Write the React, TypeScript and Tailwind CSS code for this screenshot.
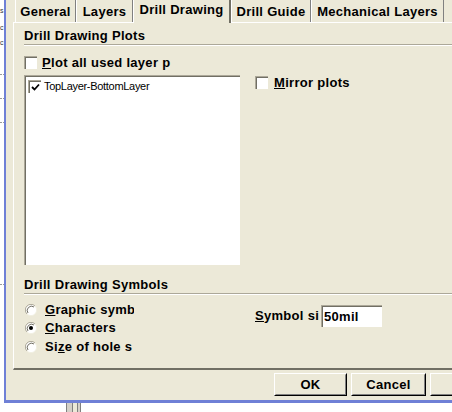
import React from 'react';

const FACE = 'bg-[#ece9d8]';

function Check({ checked = false }: { checked?: boolean }) {
  return (
    <div className="w-[13px] h-[13px] shrink-0 border-t border-l border-[#aca899] border-b-white border-r-white">
      <div className="w-full h-full border-t border-l border-[#716f64] border-b-[#f1efe2] border-r-[#f1efe2] bg-white flex items-center justify-center">
        {checked && (
          <svg width="9" height="9" viewBox="0 0 9 9">
            <path d="M1 4 L3.5 6.5 L8 1.5" stroke="#000" strokeWidth="1.8" fill="none" />
          </svg>
        )}
      </div>
    </div>
  );
}

function Radio({ checked = false }: { checked?: boolean }) {
  return (
    <svg width="12" height="12" viewBox="0 0 12 12" className="shrink-0">
      <circle cx="6" cy="6" r="5.5" fill="#fff" />
      <path d="M10 2 A5.5 5.5 0 0 0 2 10" stroke="#aca899" strokeWidth="1" fill="none" />
      <path d="M9 3 A4.3 4.3 0 0 0 3 9" stroke="#716f64" strokeWidth="1" fill="none" />
      <path d="M2 10 A5.5 5.5 0 0 0 10 2" stroke="#f1efe2" strokeWidth="1" fill="none" />
      {checked && <circle cx="6" cy="6" r="2" fill="#000" />}
    </svg>
  );
}

function GroupHeader({ label }: { label: string }) {
  return (
    <div>
      <div className="h-[17px] leading-[17px] font-bold">{label}</div>
      <div className="h-px bg-[#aca899]" />
      <div className="h-px bg-white" />
    </div>
  );
}

function Tab({ label, w, active = false }: { label: string; w: string; active?: boolean }) {
  if (active) {
    return (
      <div className={`${w} h-[23px] relative z-10 ${FACE} border-l border-white border-r-2 border-r-[#716f64] flex justify-center pt-[2px] leading-[16px] font-bold`}>
        {label}
      </div>
    );
  }
  return (
    <div className={`${w} h-[22px] ${FACE} border-l border-white border-r border-r-[#808080] flex justify-center pt-[4px] leading-[16px] font-bold`}>
      {label}
    </div>
  );
}

function Button({ label, w }: { label: string; w: string }) {
  return (
    <div className={`${w} h-[23px] border border-black border-t-white border-l-white`}>
      <div className={`w-full h-full border border-transparent border-b-[#808080] border-r-[#808080] ${FACE} flex items-center justify-center font-bold`}>
        {label}
      </div>
    </div>
  );
}

export default function App() {
  return (
    <div
      className="w-[452px] h-[412px] overflow-hidden bg-white text-[13px] tracking-[0.3px] text-black"
      style={{ fontFamily: '"Liberation Sans", Arial, sans-serif' }}
    >
      <div className="h-[403px] flex">
        {/* desktop strip behind the dialog */}
        <div className="w-[4px] shrink-0 bg-white overflow-hidden text-[7px] leading-[8px] tracking-normal text-[#333]">
          <div className="h-[7px]" />
          <div className="h-[8px]">s</div>
          <div className="h-[9px]" />
          <div className="h-[8px]">c</div>
          <div className="h-[7px]" />
          <div className="h-[8px]">c</div>
          <div className="h-[27px]" />
          <div className="h-[24px] border-t border-dotted border-[#999]" />
          <div className="h-[24px] border-t border-dotted border-[#999]" />
          <div className="h-[24px] border-t border-dotted border-[#999]" />
          <div className="h-[138px]" />
          <div className="h-[24px] border-t border-dotted border-[#999]" />
        </div>

        {/* dialog */}
        <div className={`flex-1 ${FACE} border-l-2 border-b-[3px] border-[#6f80d6]`}>
          {/* tab strip */}
          <div className="h-[22px] flex items-start pl-[9px]">
            <Tab label="General" w="w-[61px]" />
            <Tab label="Layers" w="w-[57px]" />
            <Tab label="Drill Drawing" w="w-[98px]" active />
            <Tab label="Drill Guide" w="w-[80px]" />
            <Tab label="Mechanical Layers" w="w-[133px]" />
          </div>

          {/* tab page */}
          <div className="ml-[7px] w-[460px] h-[348px] border-t border-l border-white border-b-2 border-b-[#716f64] pl-[10px] pt-[4px]">
            <GroupHeader label="Drill Drawing Plots" />

            <div className="mt-[10px] h-[13px] flex items-center">
              <Check />
              <span className="ml-[5px] font-bold">
                <span className="underline">P</span>lot all used layer p
              </span>
            </div>

            <div className="mt-[6px] flex items-start">
              <div className="w-[216px] h-[190px] border-t border-l border-[#aca899] border-b-white border-r-white">
                <div className="w-full h-full border-t border-l border-[#716f64] border-b-[#f1efe2] border-r-[#f1efe2] bg-white pl-[2px] pt-[2px]">
                  <div className="h-[14px] flex items-center">
                    <Check checked />
                    <span className="ml-[3px] text-[11px] tracking-[-0.3px]">TopLayer-BottomLayer</span>
                  </div>
                </div>
              </div>
              <div className="ml-[15px] mt-[1px] h-[13px] flex items-center">
                <Check />
                <span className="ml-[6px] font-bold">
                  <span className="underline">M</span>irror plots
                </span>
              </div>
            </div>

            <div className="mt-[11px]">
              <GroupHeader label="Drill Drawing Symbols" />
            </div>

            <div className="mt-[6px] flex items-start">
              <div className="w-[231px] pl-[1px]">
                <div className="h-[18px] flex items-center">
                  <Radio />
                  <span className="ml-[8px] w-[89px] overflow-hidden whitespace-nowrap font-bold">
                    <span className="underline">G</span>raphic symb
                  </span>
                </div>
                <div className="h-[18px] flex items-center">
                  <Radio checked />
                  <span className="ml-[8px] w-[89px] overflow-hidden whitespace-nowrap font-bold">
                    <span className="underline">C</span>haracters
                  </span>
                </div>
                <div className="h-[19px] flex items-center">
                  <Radio />
                  <span className="ml-[8px] w-[89px] overflow-hidden whitespace-nowrap font-bold">
                    Si<span className="underline">z</span>e of hole s
                  </span>
                </div>
              </div>
              <div className="mt-[4px] flex items-center">
                <span className="w-[66px] overflow-hidden whitespace-nowrap font-bold">
                  <span className="underline">S</span>ymbol si
                </span>
                <div className="w-[61px] h-[22px] border-t border-l border-[#aca899] border-b-white border-r-white">
                  <div className="w-full h-full border-t border-l border-[#716f64] border-b-[#f1efe2] border-r-[#f1efe2] bg-white pl-[1px] flex items-center font-bold">
                    50mil
                  </div>
                </div>
              </div>
            </div>
          </div>

          {/* buttons */}
          <div className="mt-[3px] pl-[268px] flex gap-[4px]">
            <Button label="OK" w="w-[73px]" />
            <Button label="Cancel" w="w-[75px]" />
            <Button label="" w="w-[75px]" />
          </div>
        </div>
      </div>

      {/* below the dialog */}
      <div className="h-[9px] flex">
        <div className="ml-[66px] w-px bg-[#808080]" />
        <div className="w-[5px] bg-[#d4d0c8]" />
        <div className="w-px bg-[#808080]" />
        <div className="w-[4px] bg-[#ece9d8]" />
        <div className="w-px bg-[#808080]" />
        <div className="w-[2px] bg-[#d4d0c8]" />
        <div className="w-px bg-[#808080]" />
      </div>
    </div>
  );
}
